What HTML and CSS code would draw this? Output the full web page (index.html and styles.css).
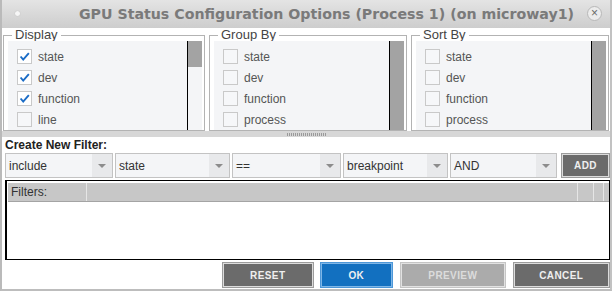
FILE: index.html
```html
<!DOCTYPE html>
<html lang="en">

<head>
    <meta charset="UTF-8">
    <title>GPU Status Configuration Options</title>
    <link rel="stylesheet" href="styles.css">
</head>

<body>
    <div class="window">
        <div class="titlebar">
            <span class="title-dot"></span>
            <span class="title-text">GPU Status Configuration Options (Process 1) (on microway1)</span>
            <span class="title-close">&times;</span>
        </div>

        <div class="groups">
            <fieldset class="group">
                <legend>Display</legend>
                <div class="panel">
                    <ul class="opts">
                        <li><span class="box checked"><svg viewBox="0 0 15 15"><path d="M3 7.5 L6 11 L12.5 3.5" /></svg></span>state</li>
                        <li><span class="box checked"><svg viewBox="0 0 15 15"><path d="M3 7.5 L6 11 L12.5 3.5" /></svg></span>dev</li>
                        <li><span class="box checked"><svg viewBox="0 0 15 15"><path d="M3 7.5 L6 11 L12.5 3.5" /></svg></span>function</li>
                        <li><span class="box"></span>line</li>
                    </ul>
                    <div class="scroll"><div class="thumb short"></div></div>
                </div>
            </fieldset>
            <fieldset class="group">
                <legend>Group By</legend>
                <div class="panel">
                    <ul class="opts">
                        <li><span class="box"></span>state</li>
                        <li><span class="box"></span>dev</li>
                        <li><span class="box"></span>function</li>
                        <li><span class="box"></span>process</li>
                    </ul>
                    <div class="scroll"><div class="thumb"></div></div>
                </div>
            </fieldset>
            <fieldset class="group">
                <legend>Sort By</legend>
                <div class="panel">
                    <ul class="opts">
                        <li><span class="box"></span>state</li>
                        <li><span class="box"></span>dev</li>
                        <li><span class="box"></span>function</li>
                        <li><span class="box"></span>process</li>
                    </ul>
                    <div class="scroll"><div class="thumb"></div></div>
                </div>
            </fieldset>
        </div>

        <div class="splitter"><span class="grip"></span></div>

        <div class="filter-label">Create New Filter:</div>
        <div class="filter-row">
            <div class="combo w-include"><span>include</span><i class="arrow"></i></div>
            <div class="combo w-state"><span>state</span><i class="arrow"></i></div>
            <div class="combo w-op"><span>==</span><i class="arrow"></i></div>
            <div class="combo w-value"><span>breakpoint</span><i class="arrow"></i></div>
            <div class="combo w-join"><span>AND</span><i class="arrow"></i></div>
            <button class="btn dark btn-add">ADD</button>
        </div>

        <div class="filters">
            <div class="filters-head">
                <div class="col first">Filters:</div>
                <div class="col fill"></div>
                <div class="col c1"></div>
                <div class="col c2"></div>
                <div class="col c3"></div>
            </div>
        </div>

        <div class="actions">
            <button class="btn dark btn-reset">RESET</button>
            <button class="btn blue btn-ok">OK</button>
            <button class="btn light btn-preview">PREVIEW</button>
            <button class="btn dark btn-cancel">CANCEL</button>
        </div>
    </div>
</body>

</html>
```

FILE: styles.css
```css
body {
    margin: 0;
    background-color: #ffffff;
    font-family: "Liberation Sans", Arial, sans-serif;
}

.window {
    width: 612px;
    height: 291px;
    box-sizing: border-box;
    border-left: 2px solid #bababa;
    border-right: 2px solid #c2c2c2;
    border-bottom: 2px solid #bdbdbd;
    background-color: #ffffff;
    overflow: hidden;
    display: flex;
    flex-direction: column;
}

/* title bar */
.titlebar {
    height: 28px;
    flex: none;
    display: flex;
    align-items: center;
    background: linear-gradient(#e4e4e4, #cdcdcd);
    padding: 0 8px 0 13px;
}

.title-dot {
    width: 5px;
    height: 5px;
    border-radius: 50%;
    background-color: #f6f6f6;
    box-shadow: 0 0 1px #aaa;
    margin-top: -2px;
}

.title-text {
    flex: 1;
    text-align: center;
    font-family: "DejaVu Sans", sans-serif;
    font-weight: bold;
    font-size: 14.2px;
    color: #7a7a7a;
    padding-left: 46px;
    margin-top: -1px;
    white-space: nowrap;
}

.title-close {
    width: 13px;
    height: 13px;
    border-radius: 50%;
    border: 1px solid #b8b8b8;
    background-color: #ececec;
    color: #6a6a6a;
    font-size: 12px;
    line-height: 12px;
    text-align: center;
    margin-top: -2px;
}

/* option groups */
.groups {
    display: grid;
    grid-template-columns: 202px 198px 198px;
    column-gap: 4px;
    margin: 1px 0 0 1px;
    height: 102px;
}

.group {
    margin: 0;
    padding: 0 2px 0 4px;
    border: 1px solid #b3b3b3;
    min-width: 0;
    display: flex;
}

.group legend {
    margin-left: 4px;
    padding: 0 3px;
    font-size: 13px;
    line-height: 12px;
    color: #444;
}

.panel {
    flex: 1;
    display: flex;
    background-color: #f4f5f7;
    overflow: hidden;
}

.opts {
    list-style: none;
    margin: 0;
    padding: 5px 0 0 9px;
    flex: 1;
}

.opts li {
    height: 21px;
    display: flex;
    align-items: center;
    font-size: 12px;
    color: #555;
}

.box {
    width: 13px;
    height: 13px;
    border: 1px solid #c9c9c9;
    background-color: #f6f7f9;
    margin-right: 6px;
    display: flex;
}

.box.checked {
    background-color: #ffffff;
}

.box svg {
    width: 13px;
    height: 13px;
}

.box svg path {
    fill: none;
    stroke: #1b6cc6;
    stroke-width: 2.2;
}

.scroll {
    width: 14px;
    border-left: 1px solid #000;
    flex: none;
}

.thumb {
    height: 100%;
    background-color: #a3a3a3;
}

.thumb.short {
    height: 26px;
}

/* splitter */
.splitter {
    height: 6px;
    flex: none;
    background-color: #d7d7d7;
    display: flex;
    justify-content: center;
    align-items: center;
}

.grip {
    width: 40px;
    height: 3px;
    margin-left: 2px;
    background: repeating-linear-gradient(90deg, #9a9a9a 0 1px, transparent 1px 2px);
}

/* create filter */
.filter-label {
    height: 16px;
    line-height: 17px;
    padding-left: 3px;
    font-size: 12px;
    font-weight: bold;
    color: #222;
}

.filter-row {
    display: flex;
    gap: 2px;
    padding-left: 3px;
    height: 25px;
    margin-top: 0;
}

.combo {
    box-sizing: border-box;
    height: 25px;
    border: 1px solid #c3c3c3;
    background-color: #f4f5f7;
    display: flex;
    align-items: center;
    font-size: 12px;
    color: #333;
}

.combo span {
    flex: 1;
    padding-left: 3px;
}

.arrow {
    width: 20px;
    height: 100%;
    background-color: #e8e9eb;
    display: flex;
    justify-content: center;
    align-items: center;
}

.arrow::after {
    content: "";
    border-left: 4px solid transparent;
    border-right: 4px solid transparent;
    border-top: 4px solid #8c8c8c;
}

.w-include { width: 108px; }
.w-state { width: 115px; }
.w-op { width: 109px; }
.w-value { width: 105px; }
.w-join { width: 107px; }

/* buttons */
.btn {
    box-sizing: border-box;
    height: 26px;
    margin: 0;
    padding: 0;
    border: 1px solid #9c9c9c;
    box-shadow: inset 0 0 0 1px #dcdcdc;
    font-family: "Liberation Sans", Arial, sans-serif;
    font-size: 10px;
    font-weight: bold;
    letter-spacing: 0.4px;
    color: #efefef;
}

.btn.dark {
    background-color: #6b6b6b;
}

.btn.blue {
    background-color: #1270c0;
    border-color: #4d97d8;
    box-shadow: inset 0 0 0 1px #7fb6e6;
}

.btn.light {
    background-color: #ababab;
    border-color: #c5c5c5;
    box-shadow: inset 0 0 0 1px #e2e2e2;
    color: #dcdcdc;
}

.btn-add {
    width: 49px;
    height: 25px;
    margin-left: 2px;
}

/* filters table */
.filters {
    margin: 2px 0 0 3px;
    height: 80px;
    box-sizing: border-box;
    border: 1px solid #000;
    border-left-width: 2px;
    padding: 2px 0 0 1px;
    flex: none;
}

.filters-head {
    height: 19px;
    box-sizing: border-box;
    display: flex;
    background-color: #c7c7c7;
    border-bottom: 1px solid #a4a4a4;
}

.filters-head .col {
    border-right: 1px solid #e6e6e6;
    font-size: 12px;
    color: #333;
    line-height: 18px;
}

.filters-head .first {
    padding-left: 3px;
    box-sizing: border-box;
    width: 79px;
}

.filters-head .fill { flex: 1; }
.filters-head .c1 { width: 15px; }
.filters-head .c2 { width: 9px; }
.filters-head .c3 { width: 5px; border-right: none; }

.actions {
    display: flex;
    gap: 6px;
    padding-left: 220px;
    margin-top: 2px;
}

.btn-reset { width: 92px; }
.btn-ok { width: 74px; }
.btn-preview { width: 106px; margin-left: 1px; }
.btn-cancel { width: 98px; margin-left: 1px; }
```
